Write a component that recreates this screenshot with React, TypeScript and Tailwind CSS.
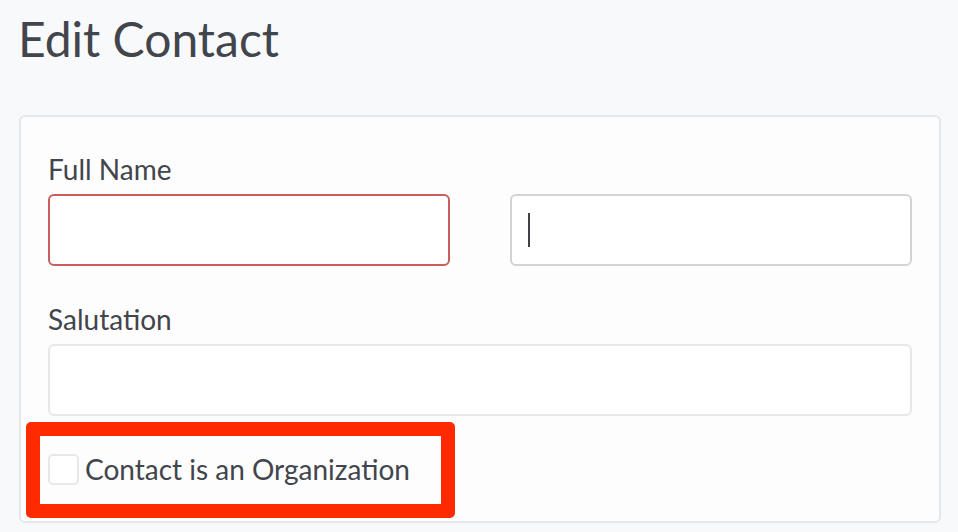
export default function App() {
  return (
    <div className="min-h-screen w-full bg-[#f8f9fb] px-[19px] pt-[10px] text-[#42454c] font-['Lato',sans-serif]">
      <h1 className="text-[48px] leading-[58px] font-normal -ml-px">Edit Contact</h1>

      <div className="mt-[47px] w-[922px] rounded-[6px] border-2 border-[#e6e7ea] bg-[#fdfdfd] px-[27px] pt-[35px] pb-[35px]">
        <label className="block text-[28px] leading-[34px]">Full Name</label>
        <div className="mt-[8px] flex gap-[60px]">
          <div className="h-[72px] w-[402px] rounded-[6px] border-2 border-[#c75f5d] bg-white" />
          <div className="flex h-[72px] w-[402px] items-center rounded-[6px] border-2 border-[#d3d3d3] bg-white pl-[16px]">
            <span className="block h-[34px] w-[2px] bg-[#3f4248]" />
          </div>
        </div>

        <label className="mt-[36px] block text-[28px] leading-[34px]">Salutation</label>
        <div className="mt-[8px] h-[72px] w-full rounded-[6px] border-2 border-[#e7e7e7] bg-white" />

        <div className="relative mt-[36px] flex items-center">
          <div className="absolute left-[-22px] top-[-30px] h-[96px] w-[429px] rounded-[5px] border-[14px] border-[#ff2a00]" />
          <span className="block h-[31px] w-[31px] rounded-[5px] border-2 border-[#e8e8e8] bg-white" />
          <span className="ml-[6px] text-[28px] leading-[34px]">Contact is an Organization</span>
        </div>
      </div>
    </div>
  );
}
